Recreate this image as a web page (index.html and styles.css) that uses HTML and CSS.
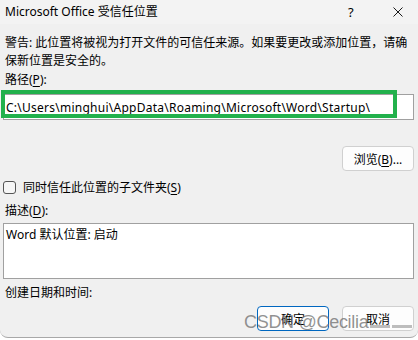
FILE: index.html
```html
<!DOCTYPE html>
<html lang="zh-CN">
<head>
    <meta charset="UTF-8">
    <meta name="viewport" content="width=device-width, initial-scale=1.0">
    <title>Microsoft Office 受信任位置</title>
    <link rel="stylesheet" href="styles.css">
</head>
<body>
    <div class="window">
        <div class="titlebar">
            <span class="title">Microsoft Office 受信任位置</span>
            <span class="help">?</span>
            <span class="close">
                <svg width="10" height="10" viewBox="0 0 10 10">
                    <path d="M0.5 0.5 L9.5 9.5 M9.5 0.5 L0.5 9.5" stroke="#1a1a1a" stroke-width="1" fill="none"/>
                </svg>
            </span>
        </div>

        <div class="content">
            <p class="warning">警告: 此位置将被视为打开文件的可信任来源。如果要更改或添加位置，请确保新位置是安全的。</p>

            <label class="label">路径(<u>P</u>):</label>
            <div class="path-box">
                <span class="path-text">C:\Users\minghui\AppData\Roaming\Microsoft\Word\Startup\</span>
                <!-- 截图里的绿色标注框 -->
                <div class="highlight"></div>
            </div>

            <div class="browse-row">
                <button class="btn">浏览(<u>B</u>)...</button>
            </div>

            <div class="check-row">
                <span class="checkbox"></span>
                <span>同时信任此位置的子文件夹(<u>S</u>)</span>
            </div>

            <label class="label">描述(<u>D</u>):</label>
            <div class="desc-box">Word 默认位置: 启动</div>

            <div class="label date">创建日期和时间:</div>

            <div class="button-row">
                <button class="btn btn-default">确定</button>
                <button class="btn">取消</button>
            </div>
        </div>

        <div class="watermark">CSDN @Cecilia<span class="wm-bar"></span><span class="wm-bar"></span></div>
    </div>
</body>
</html>
```

FILE: styles.css
```css
body {
    margin: 0;
    background-color: #ffffff;
    font-family: "Noto Sans", "Noto Sans CJK SC", sans-serif;
    font-size: 12px;
    color: #000000;
}
.window {
    position: relative;
    width: 418px;
    height: 337px;
    background-color: #f0f0f0;
    border-bottom: 1px solid #a8a8a8;
    border-radius: 0 0 8px 8px;
    overflow: hidden;
}
.titlebar {
    display: flex;
    align-items: center;
    height: 24px;
    background-color: #f3f3f3;
}
.title {
    flex: 1;
    padding-left: 5px;
    line-height: 24px;
}
.help {
    width: 14px;
    font-size: 13px;
    margin-right: 31px;
}
.close {
    display: flex;
    margin-right: 15px;
}
.content {
    padding: 10px 4px 0 3px;
}
.warning {
    margin: 0;
    padding-left: 2px;
    line-height: 18px;
}
.label {
    display: block;
    margin-top: 1px;
    padding-left: 2px;
    line-height: 18px;
}
u {
    text-decoration-thickness: 1px;
    text-underline-offset: 2px;
}
.path-box {
    position: relative;
    margin-top: 5px;
    height: 24px;
    border: 1px solid #a0a0a0;
    background-color: #ffffff;
    display: flex;
    align-items: center;
    padding-left: 2px;
}
.path-text {
    letter-spacing: 0.25px;
}
.highlight {
    position: absolute;
    left: -3px;
    top: -5px;
    width: 388px;
    height: 20px;
    border: 4px solid #22b14c;
}
.browse-row {
    display: flex;
    justify-content: flex-end;
    margin-top: 26px;
}
.btn {
    width: 72px;
    height: 25px;
    font-family: inherit;
    font-size: 12px;
    color: #000000;
    background-color: #fdfdfd;
    border: 1px solid #d0d0d0;
    border-radius: 4px;
    padding: 0;
}
.btn-default {
    border: 1px solid #0067c0;
}
.check-row {
    display: flex;
    align-items: center;
    gap: 7px;
    margin-top: 7px;
    height: 18px;
}
.checkbox {
    width: 11px;
    height: 11px;
    border: 1px solid #555555;
    border-radius: 3px;
    background-color: #f6f6f6;
}
.check-row + .label {
    margin-top: 6px;
}
.desc-box {
    margin-top: 3px;
    height: 48px;
    padding: 3px 2px;
    border: 1px solid #a0a0a0;
    background-color: #ffffff;
    line-height: 16px;
}
.date {
    margin-top: 5px;
}
.button-row {
    display: flex;
    justify-content: flex-end;
    gap: 13px;
    margin-top: 4px;
}
.watermark {
    position: absolute;
    left: 244px;
    top: 312px;
    font-family: "Liberation Sans", Arial, sans-serif;
    font-size: 18px;
    letter-spacing: -0.3px;
    color: rgba(110, 110, 110, 0.75);
    white-space: nowrap;
}
.wm-bar {
    display: inline-block;
    width: 20px;
    height: 3px;
    margin-left: 2px;
    background-color: rgba(110, 110, 110, 0.45);
}
```
